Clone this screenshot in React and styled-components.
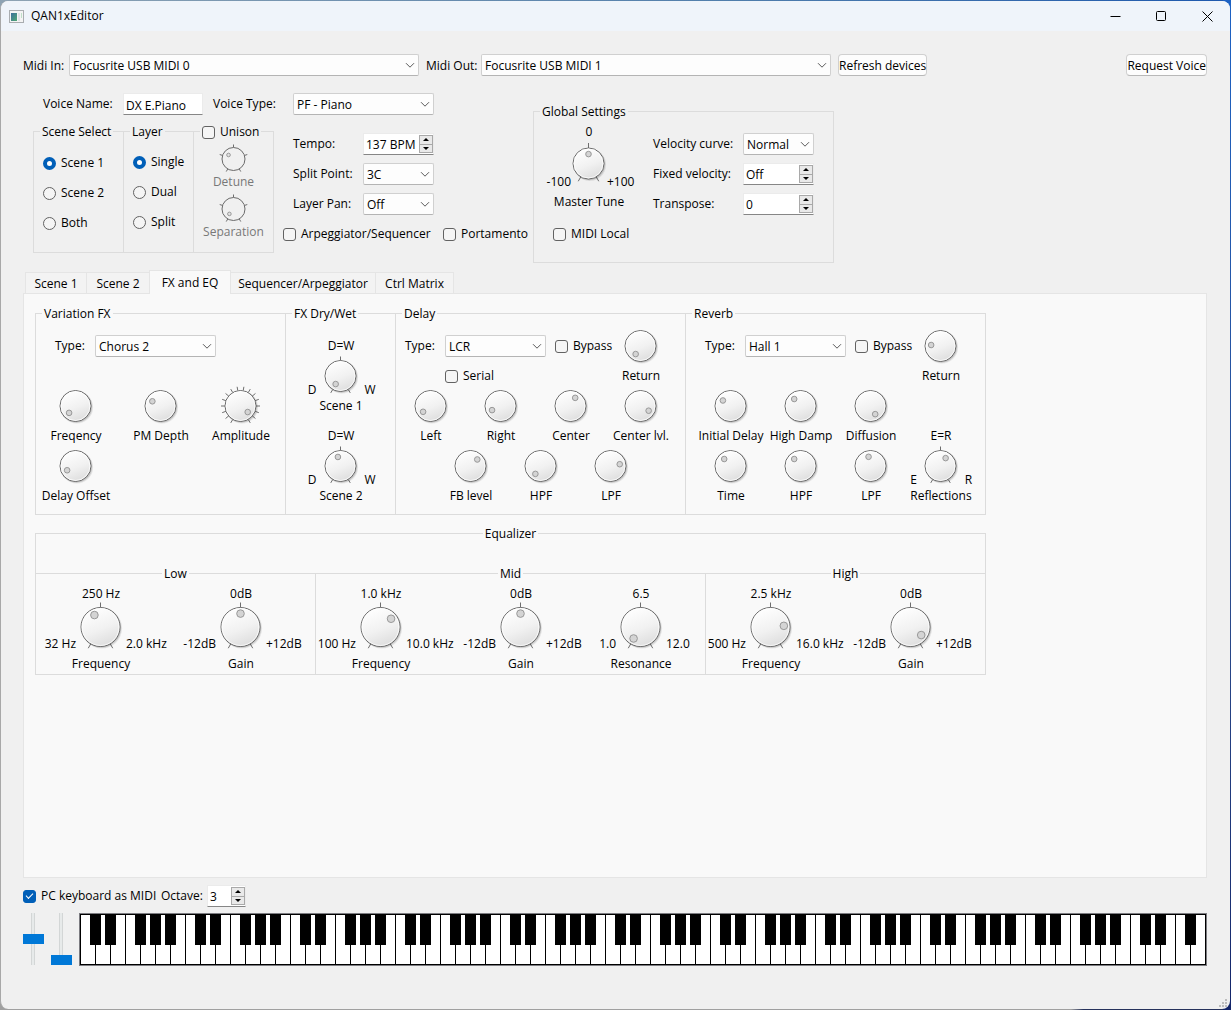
import React, { useId, useState } from "react";
import styled, { createGlobalStyle, css } from "styled-components";

const GlobalStyle = createGlobalStyle`
  *, *::before, *::after { box-sizing: border-box; }
  body {
    margin: 0;
    color: #000;
    font-family: "Open Sans", "Noto Sans", sans-serif;
    font-size: 12px;
    line-height: 16px;
  }
  button, input, select { font: inherit; color: inherit; margin: 0; }
`;

/* ---------- window frame ---------- */

const Desktop = styled.div`
  min-height: 100vh;
  padding: 1px 1px 1px 0;
  display: flex;
  background:
    linear-gradient(180deg, #1d62c4 0%, #2a4a8c 60%, #14266a 100%) right / 8px 100% no-repeat,
    linear-gradient(90deg, #a0a0a0 87%, #26325c 88%) bottom / 100% 8px no-repeat,
    linear-gradient(90deg, #8ea3b3 0%, #4f7dab 60%, #1d58ad 100%);
`;

const Window = styled.div`
  position: relative;
  flex: 1;
  display: flex;
  flex-direction: column;
  background: #f0f0f0;
  border-left: 1px solid #a8a8a8;
  border-radius: 8px;
  overflow: hidden;
`;

const TitleBar = styled.header`
  height: 30px;
  display: flex;
  align-items: center;
  padding-left: 8px;
  background: #eff4fa;
`;

const Title = styled.h1`
  flex: 1;
  margin: 0 0 0 7px;
  font-size: 12px;
  font-weight: 400;
`;

const CaptionButton = styled.button`
  width: 46px;
  height: 30px;
  padding: 0;
  border: 0;
  background: none;
  display: grid;
  place-items: center;
`;

const Body = styled.main`
  flex: 1;
  display: flex;
  flex-direction: column;
  padding: 23px 23px 43px 22px;
`;

const Grip = styled.svg`
  position: absolute;
  right: 2px;
  bottom: 1px;
`;

/* ---------- form controls ---------- */

const SelectWrap = styled.span`
  position: relative;
  display: block;
  flex: 0 ${(p) => (p.$fluid ? 1 : 0)} ${(p) => p.$width}px;
  width: ${(p) => p.$width}px;
  min-width: 0;
  height: 22px;
`;

const NativeSelect = styled.select`
  appearance: none;
  width: 100%;
  height: 22px;
  padding: 2px 18px 0 3px;
  border: 1px solid #d0d0d0;
  border-bottom-color: #b4b4b4;
  border-radius: 2px;
  background: #fdfdfd;
  line-height: 16px;
`;

const Chevron = styled.svg`
  position: absolute;
  right: 4px;
  top: 8px;
  pointer-events: none;
`;

function Combo({ id, value, width, fluid }) {
  return (
    <SelectWrap $width={width} $fluid={fluid}>
      <NativeSelect id={id} defaultValue={value}>
        <option>{value}</option>
      </NativeSelect>
      <Chevron width="10" height="7" viewBox="0 0 10 7">
        <path d="M1 1.2 L5 5.2 L9 1.2" fill="none" stroke="#5a5a5a" />
      </Chevron>
    </SelectWrap>
  );
}

const fieldLook = css`
  background: #fff;
  border: 1px solid #ebebeb;
  border-bottom-color: #868686;
`;

const TextBox = styled.input`
  ${fieldLook}
  width: 80px;
  height: 22px;
  padding: 2px 0 0 2px;
`;

const SpinWrap = styled.span`
  ${fieldLook}
  display: flex;
  width: ${(p) => p.$width}px;
  height: 22px;
`;

const SpinInput = styled.input`
  flex: 1;
  min-width: 0;
  width: 0;
  padding: 2px 0 0 2px;
  border: 0;
  background: none;
`;

const SpinButtons = styled.span`
  display: flex;
  flex-direction: column;
  width: 14px;
  padding: 1px 0;
`;

const SpinButton = styled.button`
  flex: 1;
  min-height: 0;
  padding: 0;
  border: 1px solid #a9a9a9;
  background: #e9e9e9;
  display: grid;
  place-items: center;
  & + & { border-top: 0; }
`;

function Spin({ id, value, width = 71 }) {
  return (
    <SpinWrap $width={width}>
      <SpinInput id={id} defaultValue={value} />
      <SpinButtons>
        <SpinButton type="button" aria-label="Increase">
          <svg width="6" height="3" viewBox="0 0 6 3"><path d="M0 3 L3 0 L6 3 Z" /></svg>
        </SpinButton>
        <SpinButton type="button" aria-label="Decrease">
          <svg width="6" height="3" viewBox="0 0 6 3"><path d="M0 0 L3 3 L6 0 Z" /></svg>
        </SpinButton>
      </SpinButtons>
    </SpinWrap>
  );
}

const OptionLabel = styled.label`
  display: flex;
  align-items: center;
  gap: ${(p) => p.$gap || 5}px;
  height: ${(p) => p.$height || 16}px;
  width: ${(p) => (p.$width ? `${p.$width}px` : "auto")};
  white-space: nowrap;
`;

const Box = styled.input.attrs({ type: "checkbox" })`
  appearance: none;
  flex: none;
  width: 13px;
  height: 13px;
  border: 1px solid #626262;
  border-radius: 3px;
  background: #f5f5f5;
  display: grid;
  place-content: center;
  &:checked {
    border-color: #005fb8;
    background: #005fb8;
  }
  &:checked::before {
    content: "";
    width: 7px;
    height: 4px;
    border-left: 1px solid #fff;
    border-bottom: 1px solid #fff;
    transform: translateY(-1px) rotate(-45deg);
  }
`;

const Dot = styled.input.attrs({ type: "radio" })`
  appearance: none;
  flex: none;
  width: 13px;
  height: 13px;
  border: 1px solid #626262;
  border-radius: 50%;
  background: #f5f5f5;
  &:checked {
    border: 4px solid #005fb8;
    background: #fff;
  }
`;

function Check({ children, checked, width }) {
  return (
    <OptionLabel $width={width}>
      <Box defaultChecked={checked} />
      {children}
    </OptionLabel>
  );
}

/* ---------- dials ---------- */

const DialCell = styled.label`
  display: grid;
  grid-template-columns: minmax(0, 1fr) auto minmax(0, 1fr);
  width: ${(p) => p.$width}px;
  color: ${(p) => (p.$off ? "#787878" : "#000")};
  white-space: nowrap;
`;

const Across = styled.span`
  grid-column: 1 / -1;
  display: flex;
  justify-content: center;
  margin-top: ${(p) => p.$gap || 0}px;
`;

const Side = styled.span`
  grid-column: ${(p) => p.$column};
  align-self: end;
  display: flex;
  justify-content: ${(p) => p.$align};
`;

const DialFace = styled.span`
  grid-column: 2;
  position: relative;
  display: block;
  svg { display: block; overflow: visible; }
`;

const DialInput = styled.input.attrs({ type: "range" })`
  position: absolute;
  inset: 0;
  width: 100%;
  height: 100%;
  opacity: 0;
`;

const DIALS = {
  small: { w: 36, h: 30, r: 11, notch: 6, dot: 2, tick: 3 },
  medium: { w: 40, h: 44, r: 15, notch: 9, dot: 3, tick: 4 },
  tall: { w: 36, h: 50, r: 15, notch: 9, dot: 3, tick: 5, lift: 1 },
  large: { w: 50, h: 50, r: 19, notch: 13, dot: 4, tick: 5 },
};

const TICKS = {
  three: [-150, 0, 150],
  five: [-150, -72, 0, 72, 150],
  many: Array.from({ length: 16 }, (_, i) => -150 + i * 20),
};

const polar = (cx, cy, r, deg) => {
  const a = (deg * Math.PI) / 180;
  return [cx + r * Math.sin(a), cy - r * Math.cos(a)];
};

function Dial({ label, angle, size = "medium", ticks, top, min, max, width = 70, off }) {
  const id = useId();
  const s = DIALS[size];
  const cx = s.w / 2 - 0.5;
  const cy = s.h / 2 - (s.lift ? 1.5 : 0);
  const r = s.r + 0.5;
  const [nx, ny] = polar(cx, cy, s.notch + 0.4, angle);
  const value = angle > 180 ? angle - 360 : angle;
  const roomy = size === "large" || size === "tall";
  return (
    <DialCell $width={width} $off={off}>
      {top && <Across>{top}</Across>}
      {min && <Side $column={1} $align={roomy ? "flex-end" : "center"}>{min}</Side>}
      <DialFace>
        <svg width={s.w} height={s.h}>
          <defs>
            <linearGradient id={`${id}f`} x1="0.3" y1="0" x2="0.7" y2="1">
              <stop offset="0" stopColor="#ffffff" />
              <stop offset="0.55" stopColor="#f1f1f1" />
              <stop offset="1" stopColor="#dcdcdc" />
            </linearGradient>
          </defs>
          {(TICKS[ticks] || []).map((t) => {
            const [x1, y1] = polar(cx, cy, r, t);
            const [x2, y2] = polar(cx, cy, r + s.tick, t);
            return <line key={t} x1={x1} y1={y1} x2={x2} y2={y2} stroke="#6e6e6e" />;
          })}
          {off ? (
            <circle cx={cx} cy={cy} r={r} fill="#f0f0f0" stroke="#6a6a6a" />
          ) : (
            <>
              <circle cx={cx + 1.3} cy={cy + 1.3} r={r + 0.8} fill="#000" opacity="0.08" />
              <circle cx={cx + 0.8} cy={cy + 0.8} r={r + 0.4} fill="#000" opacity="0.14" />
              <circle cx={cx} cy={cy} r={r} fill={`url(#${id}f)`} stroke="#676767" />
              <circle cx={cx} cy={cy} r={r - 1} fill="none" stroke="#fff" opacity="0.8" />
            </>
          )}
          <circle cx={nx} cy={ny} r={s.dot - 0.2} fill={off ? "#e2e2e2" : "#d4d4d4"} stroke="#989898" />
        </svg>
        <DialInput min={-180} max={180} defaultValue={value} disabled={off} />
      </DialFace>
      {max && <Side $column={3} $align={roomy ? "flex-start" : "center"}>{max}</Side>}
      <Across $gap={roomy ? 4 : 0}>{label}</Across>
    </DialCell>
  );
}

/* ---------- groups ---------- */

const Group = styled.fieldset`
  flex: none;
  min-width: 0;
  width: ${(p) => (p.$width ? `${p.$width}px` : "auto")};
  margin: 0;
  padding: 1px 0 0;
  border: 1px solid #dcdcdc;
  & + & { margin-left: -1px; }
`;

const Legend = styled.legend`
  height: 15px;
  margin-left: ${(p) => (p.$center ? "auto" : "6px")};
  margin-right: auto;
  padding: 0 2px;
`;

const Row = styled.div`
  display: flex;
`;

const Stack = styled.div`
  display: flex;
  flex-direction: column;
  gap: ${(p) => p.$gap || 0}px;
  padding: ${(p) => p.$pad || "0"};
`;

/* ---------- top area ---------- */

const DeviceRow = styled.div`
  display: flex;
  align-items: center;
  gap: 7px;
  white-space: nowrap;
`;

const DeviceLabel = styled.label`
  flex: none;
  padding-top: 2px;
  width: ${(p) => p.$width}px;
`;

const PushButton = styled.button`
  flex: none;
  height: 22px;
  min-width: ${(p) => p.$width}px;
  padding: 2px 0 0;
  border: 1px solid #d0d0d0;
  border-bottom-color: #b8b8b8;
  border-radius: 4px;
  background: #fdfdfd;
  white-space: nowrap;
  &:last-child { margin-left: auto; }
`;

const VoiceArea = styled.section`
  display: flex;
  padding: 17px 0 7px 10px;
`;

const VoicePart = styled.div`
  flex: none;
  width: 500px;
`;

const VoiceRow = styled.div`
  display: flex;
  align-items: center;
  gap: 10px;
  padding: 0 0 9px 10px;
`;

const Field = styled.div`
  display: flex;
  align-items: center;
  height: ${(p) => p.$height || 22}px;
  padding-left: ${(p) => p.$indent || 0}px;
`;

const FieldLabel = styled.label`
  flex: none;
  width: ${(p) => p.$width}px;
  white-space: nowrap;
`;

const CheckRow = styled.div`
  display: flex;
  align-items: center;
  height: 30px;
`;

const GlobalGroup = styled(Group)`
  margin-top: 11px;
  height: 159px;
`;

const GlobalColumns = styled.div`
  display: flex;
  align-items: flex-start;
  gap: 9px;
  padding-top: 4px;
`;

/* ---------- tabs ---------- */

const TabBar = styled.div`
  display: flex;
  align-items: flex-end;
  padding-left: 2px;
  height: 23px;
`;

const Tab = styled.button`
  width: ${(p) => p.$width}px;
  height: ${(p) => (p.$active ? 24 : 21)}px;
  margin-bottom: ${(p) => (p.$active ? "-1px" : "0")};
  padding: ${(p) => (p.$active ? "0" : "2px 0 0")};
  border: 1px solid #e5e5e5;
  border-bottom: 0;
  background: ${(p) => (p.$active ? "#f9f9f9" : "#f3f3f3")};
  white-space: nowrap;
  z-index: ${(p) => (p.$active ? 1 : 0)};
  & + & { margin-left: -1px; }
`;

const Panel = styled.section`
  flex: 1;
  display: flex;
  flex-direction: column;
  gap: 11px;
  padding: 12px 11px;
  border: 1px solid #e5e5e5;
  background: #f9f9f9;
`;

const FxGroup = styled(Group)`
  height: 209px;
`;

const FxGrid = styled.div`
  display: grid;
  grid-template-columns: ${(p) => p.$columns};
  grid-template-rows: repeat(3, 60px);
  padding: 2px 0 0 ${(p) => p.$indent || 0}px;
`;

const TypeBlock = styled.div`
  grid-column: 1 / ${(p) => p.$end};
  display: flex;
  flex-direction: column;
  gap: 11px;
  padding: 11px 0 0 ${(p) => p.$indent}px;
`;

const TypeRow = styled.div`
  display: flex;
  align-items: center;
  height: 22px;
  & > label:last-child { margin-left: 9px; }
`;

const Indented = styled.div`
  padding-left: 40px;
`;

const Shifted = styled.div`
  grid-column: 1 / -1;
  display: flex;
  padding-left: 40px;
`;

const Tall = styled.div`
  grid-column: 4;
  grid-row: 2 / 4;
  align-self: end;
`;

const Equalizer = styled(Group)`
  width: 951px;
`;

const Bands = styled.div`
  display: flex;
  margin: 24px -1px -1px;
`;

const BandDials = styled.div`
  display: flex;
  gap: 10px;
  padding: 4px 0 2px;
`;

/* ---------- keyboard ---------- */

const OctaveRow = styled.div`
  display: flex;
  align-items: center;
  height: 22px;
  margin: 7px 0 6px;
`;

const KeyboardRow = styled.div`
  display: flex;
  height: 53px;
`;

const Wheel = styled.input.attrs({ type: "range" })`
  appearance: none;
  writing-mode: vertical-lr;
  direction: rtl;
  width: 21px;
  height: 52px;
  && { margin: 0 7px 0 0; }
  background: linear-gradient(90deg, transparent 8px, #d3d6d6 8px 9px, #e7eaea 9px 11px, #d3d6d6 11px 12px, transparent 12px);
  &::-webkit-slider-thumb {
    appearance: none;
    width: 21px;
    height: 10px;
    border: 0;
    border-radius: 0;
    background: #0078d7;
  }
`;

const Piano = styled.div`
  flex: 1;
  display: flex;
  border: 1px solid #7b7b80;
  background: #000;
  padding: 1px 0 1px 1px;
`;

const KeySlot = styled.div`
  position: relative;
  flex: 1 1 0;
  display: flex;
`;

const WhiteKey = styled.button`
  flex: 1;
  padding: 0;
  border: 0;
  border-right: 1px solid #000;
  background: #fff;
`;

const BlackKey = styled.button`
  position: absolute;
  z-index: 1;
  top: 0;
  right: -5px;
  width: 11px;
  height: 30px;
  padding: 0;
  border: 0;
  background: #000;
`;

const WHITE_KEYS = 75;
const NOTES = ["C", "D", "E", "F", "G", "A", "B"];
const keys = Array.from({ length: WHITE_KEYS }, (_, i) => {
  const note = NOTES[i % 7];
  const octave = Math.floor(i / 7) - 1;
  const sharp = note !== "E" && note !== "B" && i < WHITE_KEYS - 1;
  return { note, octave, sharp };
});

const TABS = [
  ["Scene 1", 62],
  ["Scene 2", 64],
  ["FX and EQ", 82],
  ["Sequencer/Arpeggiator", 146],
  ["Ctrl Matrix", 79],
];

export default function App() {
  const [tab, setTab] = useState("FX and EQ");
  return (
    <>
      <GlobalStyle />
      <Desktop>
        <Window>
          <TitleBar>
            <svg width="15" height="13" viewBox="0 0 15 13">
              <defs>
                <linearGradient id="appIcon" x1="0" y1="0" x2="1" y2="1">
                  <stop offset="0" stopColor="#3d6f9c" />
                  <stop offset="1" stopColor="#4fa873" />
                </linearGradient>
              </defs>
              <rect x="0.5" y="0.5" width="14" height="12" fill="#f4f4f4" stroke="#a9adb0" />
              <rect x="2" y="3" width="6" height="8" fill="url(#appIcon)" />
              <rect x="9" y="3" width="2" height="8" fill="#dfe3e6" />
              <rect x="12" y="3" width="1" height="5" fill="#bfe0c8" />
            </svg>
            <Title>QAN1xEditor</Title>
            <CaptionButton type="button" aria-label="Minimize">
              <svg width="11" height="11"><path d="M0.5 5.5 H10.5" stroke="#000" /></svg>
            </CaptionButton>
            <CaptionButton type="button" aria-label="Maximize">
              <svg width="11" height="11">
                <rect x="0.5" y="0.5" width="9" height="9" rx="1" fill="none" stroke="#000" />
              </svg>
            </CaptionButton>
            <CaptionButton type="button" aria-label="Close">
              <svg width="11" height="11">
                <path d="M0.5 0.5 L10.5 10.5 M10.5 0.5 L0.5 10.5" stroke="#000" />
              </svg>
            </CaptionButton>
          </TitleBar>

          <Body>
            <DeviceRow>
              <DeviceLabel htmlFor="midi-in" $width={39}>Midi In:</DeviceLabel>
              <Combo id="midi-in" value="Focusrite USB MIDI 0" width={350} fluid />
              <DeviceLabel htmlFor="midi-out" $width={48}>Midi Out:</DeviceLabel>
              <Combo id="midi-out" value="Focusrite USB MIDI 1" width={350} fluid />
              <PushButton type="button" $width={87}>Refresh devices</PushButton>
              <PushButton type="button" $width={79}>Request Voice</PushButton>
            </DeviceRow>

            <VoiceArea>
              <VoicePart>
                <VoiceRow>
                  <Field>
                    <FieldLabel htmlFor="voice-name" $width={80}>Voice Name:</FieldLabel>
                    <TextBox id="voice-name" defaultValue="DX E.Piano" />
                  </Field>
                  <Field>
                    <FieldLabel htmlFor="voice-type" $width={80}>Voice Type:</FieldLabel>
                    <Combo id="voice-type" value="PF - Piano" width={141} />
                  </Field>
                </VoiceRow>
                <Row>
                  <Group $width={91}>
                    <Legend>Scene Select</Legend>
                    <Stack $pad="8px 0 14px 9px">
                      <OptionLabel $gap={5} $height={30}><Dot name="scene" defaultChecked />Scene 1</OptionLabel>
                      <OptionLabel $gap={5} $height={30}><Dot name="scene" />Scene 2</OptionLabel>
                      <OptionLabel $gap={5} $height={30}><Dot name="scene" />Both</OptionLabel>
                    </Stack>
                  </Group>
                  <Group $width={71}>
                    <Legend>Layer</Legend>
                    <Stack $pad="7px 0 0 9px">
                      <OptionLabel $gap={5} $height={30}><Dot name="layer" defaultChecked />Single</OptionLabel>
                      <OptionLabel $gap={5} $height={30}><Dot name="layer" />Dual</OptionLabel>
                      <OptionLabel $gap={5} $height={30}><Dot name="layer" />Split</OptionLabel>
                    </Stack>
                  </Group>
                  <Group $width={81}>
                    <Legend><Check>Unison</Check></Legend>
                    <Stack $gap={4} $pad="4px 0 0 0">
                      <Dial off size="small" ticks="five" width={79} angle={309} label="Detune" />
                      <Dial off size="small" ticks="five" width={79} angle={220} label="Separation" />
                    </Stack>
                  </Group>
                  <Stack $pad="5px 0 0 9px">
                    <Field $height={30} $indent={10}>
                      <FieldLabel htmlFor="tempo" $width={70}>Tempo:</FieldLabel>
                      <Spin id="tempo" value="137 BPM" />
                    </Field>
                    <Field $height={30} $indent={10}>
                      <FieldLabel htmlFor="split-point" $width={70}>Split Point:</FieldLabel>
                      <Combo id="split-point" value="3C" width={71} />
                    </Field>
                    <Field $height={30} $indent={10}>
                      <FieldLabel htmlFor="layer-pan" $width={70}>Layer Pan:</FieldLabel>
                      <Combo id="layer-pan" value="Off" width={71} />
                    </Field>
                    <CheckRow>
                      <Check width={160}>Arpeggiator/Sequencer</Check>
                      <Check>Portamento</Check>
                    </CheckRow>
                  </Stack>
                </Row>
              </VoicePart>

              <GlobalGroup $width={301}>
                <Legend>Global Settings</Legend>
                <GlobalColumns>
                  <Dial size="tall" ticks="three" width={110} angle={0} top="0" min="-100" max="+100" label="Master Tune" />
                  <Stack $pad="5px 0 0 0">
                    <Field $height={30}>
                      <FieldLabel htmlFor="velocity-curve" $width={90}>Velocity curve:</FieldLabel>
                      <Combo id="velocity-curve" value="Normal" width={71} />
                    </Field>
                    <Field $height={30}>
                      <FieldLabel htmlFor="fixed-velocity" $width={90}>Fixed velocity:</FieldLabel>
                      <Spin id="fixed-velocity" value="Off" />
                    </Field>
                    <Field $height={30}>
                      <FieldLabel htmlFor="transpose" $width={90}>Transpose:</FieldLabel>
                      <Spin id="transpose" value="0" />
                    </Field>
                  </Stack>
                </GlobalColumns>
                <Stack $pad="7px 0 0 19px">
                  <Check>MIDI Local</Check>
                </Stack>
              </GlobalGroup>
            </VoiceArea>

            <TabBar role="tablist">
              {TABS.map(([name, width]) => (
                <Tab
                  key={name}
                  type="button"
                  role="tab"
                  aria-selected={tab === name}
                  $width={width}
                  $active={tab === name}
                  onClick={() => setTab(name)}
                >
                  {name}
                </Tab>
              ))}
            </TabBar>

            <Panel role="tabpanel">
              <Row>
                <FxGroup $width={251}>
                  <Legend>Variation FX</Legend>
                  <FxGrid $columns="80px 90px 70px">
                    <TypeBlock $end={4} $indent={19}>
                      <TypeRow>
                        <FieldLabel htmlFor="variation-type" $width={40}>Type:</FieldLabel>
                        <Combo id="variation-type" value="Chorus 2" width={121} />
                      </TypeRow>
                    </TypeBlock>
                    <Dial width={80} angle={223} label="Freqency" />
                    <Dial width={90} angle={300} label="PM Depth" />
                    <Dial width={70} angle={130} ticks="many" label="Amplitude" />
                    <Dial width={80} angle={243} label="Delay Offset" />
                  </FxGrid>
                </FxGroup>

                <FxGroup $width={111}>
                  <Legend>FX Dry/Wet</Legend>
                  <Stack $gap={14} $pad="16px 0 0 17px">
                    <Dial ticks="three" width={76} angle={211} top="D=W" min="D" max="W" label="Scene 1" />
                    <Dial ticks="three" width={76} angle={344} top="D=W" min="D" max="W" label="Scene 2" />
                  </Stack>
                </FxGroup>

                <FxGroup $width={291}>
                  <Legend>Delay</Legend>
                  <FxGrid $columns="repeat(4, 70px)">
                    <TypeBlock $end={4} $indent={9}>
                      <TypeRow>
                        <FieldLabel htmlFor="delay-type" $width={40}>Type:</FieldLabel>
                        <Combo id="delay-type" value="LCR" width={101} />
                        <Check>Bypass</Check>
                      </TypeRow>
                      <Indented><Check>Serial</Check></Indented>
                    </TypeBlock>
                    <Dial angle={211} label="Return" />
                    <Dial angle={232} label="Left" />
                    <Dial angle={244} label="Right" />
                    <Dial angle={30} label="Center" />
                    <Dial angle={120} label="Center lvl." />
                    <Shifted>
                      <Dial angle={46} label="FB level" />
                      <Dial angle={213} label="HPF" />
                      <Dial angle={79} label="LPF" />
                    </Shifted>
                  </FxGrid>
                </FxGroup>

                <FxGroup $width={301}>
                  <Legend>Reverb</Legend>
                  <FxGrid $columns="repeat(4, 70px)" $indent={10}>
                    <TypeBlock $end={4} $indent={9}>
                      <TypeRow>
                        <FieldLabel htmlFor="reverb-type" $width={40}>Type:</FieldLabel>
                        <Combo id="reverb-type" value="Hall 1" width={101} />
                        <Check>Bypass</Check>
                      </TypeRow>
                    </TypeBlock>
                    <Dial angle={276} label="Return" />
                    <Dial angle={306} label="Initial Delay" />
                    <Dial angle={318} label="High Damp" />
                    <Dial angle={150} label="Diffusion" />
                    <Tall>
                      <Dial ticks="three" angle={33} top="E=R" min="E" max="R" label="Reflections" />
                    </Tall>
                    <Dial angle={318} label="Time" />
                    <Dial angle={318} label="HPF" />
                    <Dial angle={348} label="LPF" />
                  </FxGrid>
                </FxGroup>
              </Row>

              <Equalizer>
                <Legend $center>Equalizer</Legend>
                <Bands>
                  <Group $width={281}>
                    <Legend $center>Low</Legend>
                    <BandDials>
                      <Dial size="large" ticks="three" width={130} angle={333} top="250 Hz" min="32 Hz" max="2.0 kHz" label="Frequency" />
                      <Dial size="large" ticks="three" width={130} angle={0} top="0dB" min="-12dB" max="+12dB" label="Gain" />
                    </BandDials>
                  </Group>
                  <Group $width={391}>
                    <Legend $center>Mid</Legend>
                    <BandDials>
                      <Dial size="large" ticks="three" width={130} angle={52} top="1.0 kHz" min="100 Hz" max="10.0 kHz" label="Frequency" />
                      <Dial size="large" ticks="three" width={130} angle={0} top="0dB" min="-12dB" max="+12dB" label="Gain" />
                      <Dial size="large" ticks="three" width={90} angle={211} top="6.5" min="1.0" max="12.0" label="Resonance" />
                    </BandDials>
                  </Group>
                  <Group $width={281}>
                    <Legend $center>High</Legend>
                    <BandDials>
                      <Dial size="large" ticks="three" width={130} angle={85} top="2.5 kHz" min="500 Hz" max="16.0 kHz" label="Frequency" />
                      <Dial size="large" ticks="three" width={130} angle={127} top="0dB" min="-12dB" max="+12dB" label="Gain" />
                    </BandDials>
                  </Group>
                </Bands>
              </Equalizer>
            </Panel>

            <OctaveRow>
              <Check checked width={138}>PC keyboard as MIDI</Check>
              <FieldLabel htmlFor="octave" $width={46}>Octave:</FieldLabel>
              <Spin id="octave" value="3" width={39} />
            </OctaveRow>

            <KeyboardRow>
              <Wheel aria-label="Pitch wheel" min="0" max="100" defaultValue="50" />
              <Wheel aria-label="Modulation wheel" min="0" max="100" defaultValue="0" />
              <Piano>
                {keys.map((k) => (
                  <KeySlot key={k.note + k.octave}>
                    <WhiteKey type="button" aria-label={k.note + k.octave} />
                    {k.sharp && <BlackKey type="button" aria-label={`${k.note}#${k.octave}`} />}
                  </KeySlot>
                ))}
              </Piano>
            </KeyboardRow>
          </Body>

          <Grip width="9" height="9" fill="#bdbdbd">
            <rect x="6" y="0" width="2" height="2" />
            <rect x="3" y="3" width="2" height="2" />
            <rect x="6" y="3" width="2" height="2" />
            <rect x="0" y="6" width="2" height="2" />
            <rect x="3" y="6" width="2" height="2" />
            <rect x="6" y="6" width="2" height="2" />
          </Grip>
        </Window>
      </Desktop>
    </>
  );
}
